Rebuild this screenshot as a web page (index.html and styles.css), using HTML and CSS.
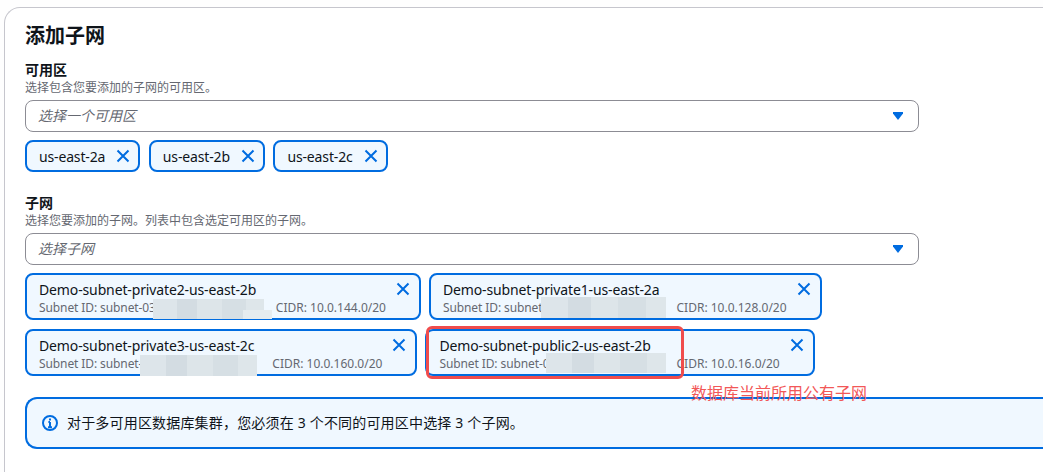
FILE: index.html
```html
<!DOCTYPE html>
<html lang="zh">
<head>
<meta charset="utf-8">
<title>添加子网</title>
<link rel="stylesheet" href="styles.css">
</head>
<body>
<section class="card">
  <h2 class="title">添加子网</h2>

  <div class="label">可用区</div>
  <div class="desc">选择包含您要添加的子网的可用区。</div>
  <div class="select">
    <span class="placeholder">选择一个可用区</span>
    <svg class="caret" viewBox="0 0 10 8"><path d="M0 0h10v1.5L5 8 0 1.5z"/></svg>
  </div>
  <div class="tags">
    <div class="tag"><span>us-east-2a</span><svg class="x" viewBox="0 0 16 16"><path d="M2.5 2.5l11 11M13.5 2.5l-11 11"/></svg></div>
    <div class="tag"><span>us-east-2b</span><svg class="x" viewBox="0 0 16 16"><path d="M2.5 2.5l11 11M13.5 2.5l-11 11"/></svg></div>
    <div class="tag"><span>us-east-2c</span><svg class="x" viewBox="0 0 16 16"><path d="M2.5 2.5l11 11M13.5 2.5l-11 11"/></svg></div>
  </div>

  <div class="label label-second">子网</div>
  <div class="desc">选择您要添加的子网。列表中包含选定可用区的子网。</div>
  <div class="select">
    <span class="placeholder">选择子网</span>
    <svg class="caret" viewBox="0 0 10 8"><path d="M0 0h10v1.5L5 8 0 1.5z"/></svg>
  </div>

  <div class="subnets">
    <div class="subnet-row">
      <div class="subnet">
        <div class="subnet-body">
          <div class="subnet-name">Demo-subnet-private2-us-east-2b</div>
          <div class="subnet-meta"><span class="subnet-id">Subnet ID: subnet-03</span><span class="patch patch-a"></span><span>CIDR: 10.0.144.0/20</span></div>
        </div>
        <svg class="x" viewBox="0 0 16 16"><path d="M2.5 2.5l11 11M13.5 2.5l-11 11"/></svg>
      </div>
      <div class="subnet">
        <div class="subnet-body">
          <div class="subnet-name">Demo-subnet-private1-us-east-2a</div>
          <div class="subnet-meta"><span class="subnet-id">Subnet ID: subnet</span><span class="patch patch-b"></span><span>CIDR: 10.0.128.0/20</span></div>
        </div>
        <svg class="x" viewBox="0 0 16 16"><path d="M2.5 2.5l11 11M13.5 2.5l-11 11"/></svg>
      </div>
    </div>
    <div class="subnet-row row-second">
      <div class="subnet">
        <div class="subnet-body">
          <div class="subnet-name">Demo-subnet-private3-us-east-2c</div>
          <div class="subnet-meta"><span class="subnet-id">Subnet ID: subnet-</span><span class="patch patch-c"></span><span>CIDR: 10.0.160.0/20</span></div>
        </div>
        <svg class="x" viewBox="0 0 16 16"><path d="M2.5 2.5l11 11M13.5 2.5l-11 11"/></svg>
      </div>
      <div class="subnet">
        <div class="subnet-body">
          <div class="subnet-name">Demo-subnet-public2-us-east-2b</div>
          <div class="subnet-meta"><span class="subnet-id">Subnet ID: subnet-0</span><span class="patch patch-d"></span><span>CIDR: 10.0.16.0/20</span></div>
        </div>
        <svg class="x" viewBox="0 0 16 16"><path d="M2.5 2.5l11 11M13.5 2.5l-11 11"/></svg>
      </div>
    </div>
    <div class="callout"></div>
    <div class="callout-text">数据库当前所用公有子网</div>
  </div>

  <div class="alert">
    <svg class="info" viewBox="0 0 16 16"><circle cx="8" cy="8" r="7"/><path d="M8 7v5M6 12.2h4M6.4 7H8"/><path class="dot" d="M7 3.4h2v2H7z"/></svg>
    <span>对于多可用区数据库集群，您必须在 3 个不同的可用区中选择 3 个子网。</span>
  </div>
</section>
</body>
</html>
```

FILE: styles.css
```css
* { box-sizing: border-box; }

html, body {
  margin: 0;
  height: 100%;
  overflow: hidden;
  background: #fefefe;
}

body {
  padding: 7px 0 0 4px;
  font-family: "Noto Sans", "Noto Sans CJK SC", sans-serif;
  color: #0f141a;
}

.card {
  height: 100%;
  padding: 16px 0 0 20px;
  background: #fff;
  border: 1px solid #c6c6cd;
  border-width: 1px 0 0 1px;
  border-radius: 16px 0 0 0;
}

.title {
  margin: 0 0 14px;
  font-size: 20px;
  line-height: 24px;
  font-weight: 700;
}

.label {
  font-size: 14px;
  line-height: 16px;
  font-weight: 700;
}

.label-second { margin-top: 23px; }

.desc {
  margin: 2px 0 4px;
  font-size: 12px;
  line-height: 16px;
  color: #656871;
}

.select {
  display: flex;
  align-items: center;
  justify-content: space-between;
  width: 894px;
  height: 32px;
  padding: 0 15px 0 12px;
  border: 1px solid #8c8c94;
  border-radius: 8px;
  background: #fff;
}

.placeholder {
  position: relative;
  top: -1px;
  font-size: 14px;
  font-style: italic;
  color: #656871;
}

.caret {
  width: 10px;
  height: 8px;
  fill: #006ce0;
}

.tags {
  display: flex;
  gap: 8.6px;
  margin-top: 8px;
}

.tag {
  display: flex;
  align-items: center;
  gap: 10px;
  height: 32px;
  padding: 0 7px 0 12px;
  font-size: 14px;
  letter-spacing: -0.15px;
  background: #f0f8ff;
  border: 2px solid #006ce0;
  border-radius: 8px;
}

.x {
  flex: none;
  width: 16px;
  height: 16px;
  fill: none;
  stroke: #006ce0;
  stroke-width: 2;
}

.subnets {
  position: relative;
  margin-top: 8px;
}

.subnet-row {
  display: flex;
  gap: 8px;
}

.row-second {
  margin-top: 9px;
}

.subnet {
  display: flex;
  align-items: flex-start;
  gap: 9px;
  height: 47px;
  padding: 5px 8px 0 12px;
  background: #f0f8ff;
  border: 2px solid #006ce0;
  border-radius: 8px;
}

.subnet .x { margin-top: 1px; }

.subnet-name {
  font-size: 14px;
  line-height: 20px;
  letter-spacing: -0.13px;
}

.subnet-meta {
  display: flex;
  align-items: flex-start;
  height: 16px;
  font-size: 12px;
  line-height: 16px;
  color: #656871;
}

.subnet-id { letter-spacing: -0.1px; }

.patch {
  position: relative;
  flex: none;
  background: linear-gradient(90deg, #dde5ea 0 22%, #d3dce2 22% 40%, #dde5e9 40% 62%, #d6dfe4 62% 84%, #dee6ea 84%);
}

.patch-a {
  width: 111px;
  height: 20px;
  margin: -1px 12px 0 -3px;
}

.patch-a::after {
  content: "";
  position: absolute;
  left: 90px;
  top: 11px;
  width: 29px;
  height: 9px;
  background: #e6ecef;
}

.patch-b {
  width: 125px;
  height: 21px;
  margin: -3px 11px 0 -2px;
}

.patch-c {
  width: 117px;
  height: 21px;
  margin: -1px 15px 0 -2px;
}

.patch-d {
  width: 120px;
  height: 20px;
  margin: -3px 11px 0 -4px;
}

.callout {
  position: absolute;
  left: 401px;
  top: 53px;
  width: 258px;
  height: 53px;
  border: 3px solid #f04c4c;
  border-radius: 6px;
}

.callout-text {
  position: absolute;
  left: 666px;
  top: 110px;
  font-size: 16px;
  line-height: 20px;
  color: #f25858;
  white-space: nowrap;
}

.alert {
  display: flex;
  align-items: center;
  gap: 9px;
  height: 52px;
  margin-top: 21px;
  padding-left: 15px;
  font-size: 14px;
  letter-spacing: 0.18px;
  background: #f0f8ff;
  border: 2px solid #006ce0;
  border-right: 0;
  border-radius: 12px 0 0 12px;
}

.alert span {
  position: relative;
  top: -1px;
}

.info {
  flex: none;
  width: 16px;
  height: 16px;
  fill: none;
  stroke: #006ce0;
  stroke-width: 2;
}

.info .dot {
  fill: #006ce0;
  stroke: none;
}
```
